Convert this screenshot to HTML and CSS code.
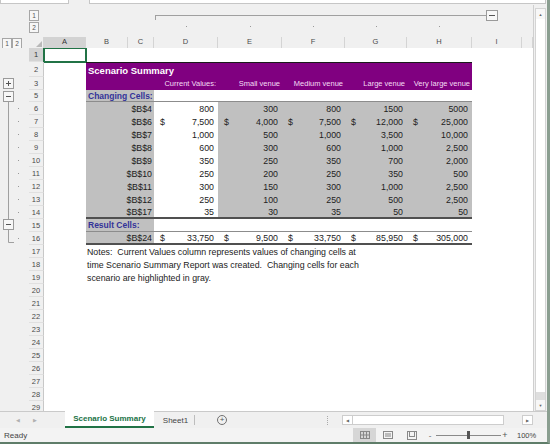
FILE: index.html
```html
<!DOCTYPE html>
<html>
<head>
    <title>Scenario Summary - Excel</title>
    <meta charset="utf-8">
    <link rel="stylesheet" href="styles.css">
</head>
<body>
<div class="window">
    <div class="formula-strip">
        <span class="box box-name"></span>
        <span class="box box-formula"></span>
    </div>

    <div class="work">
        <div class="sheet">
            <!-- column outline levels -->
            <div class="col-outline">
                <div class="gap-outline"></div>
                <div class="level-v">
                    <span class="obtn">1</span>
                    <span class="obtn">2</span>
                </div>
                <svg class="col-bracket" width="489" height="32" viewBox="0 0 489 32">
                    <line x1="111" y1="10.5" x2="442" y2="10.5" stroke="#a0a0a0" stroke-width="1"/>
                    <line x1="111.5" y1="10" x2="111.5" y2="15" stroke="#a0a0a0" stroke-width="1"/>
                    <rect x="442.5" y="5.5" width="11" height="10" fill="#f7f7f7" stroke="#9a9a9a"/>
                    <line x1="445" y1="10.5" x2="451" y2="10.5" stroke="#555" stroke-width="1"/>
                    <rect x="142" y="21" width="1" height="1" fill="#999"/>
                    <rect x="206" y="21" width="1" height="1" fill="#999"/>
                    <rect x="269" y="21" width="1" height="1" fill="#999"/>
                    <rect x="332" y="21" width="1" height="1" fill="#999"/>
                    <rect x="395" y="21" width="1" height="1" fill="#999"/>
                </svg>
            </div>

            <!-- column headers -->
            <div class="col-header">
                <div class="ch-outline">
                    <span class="obtn">1</span><span class="obtn">2</span>
                </div>
                <div class="ch corner"><span class="corner-tri"></span></div>
                <div class="ch ch-sel">A</div>
                <div class="ch">B</div>
                <div class="ch">C</div>
                <div class="ch">D</div>
                <div class="ch">E</div>
                <div class="ch">F</div>
                <div class="ch">G</div>
                <div class="ch">H</div>
                <div class="ch">I</div>
                <div class="ch"></div>
            </div>

            <div class="sheet-body">
                <svg class="row-outline" width="29" height="366" viewBox="0 0 29 366">
                    <rect x="3.5" y="30.5" width="10" height="10" fill="#f7f7f7" stroke="#9a9a9a"/>
                    <line x1="6" y1="35.5" x2="11" y2="35.5" stroke="#555"/>
                    <line x1="8.5" y1="33" x2="8.5" y2="38" stroke="#555"/>
                    <rect x="3.5" y="43.5" width="10" height="10" fill="#f7f7f7" stroke="#9a9a9a"/>
                    <line x1="6" y1="48.5" x2="11" y2="48.5" stroke="#555"/>
                    <line x1="8.5" y1="53.5" x2="8.5" y2="171.5" stroke="#a0a0a0"/>
                    <rect x="3.5" y="171.5" width="10" height="10" fill="#f7f7f7" stroke="#9a9a9a"/>
                    <line x1="6" y1="176.5" x2="11" y2="176.5" stroke="#555"/>
                    <polyline points="8.5,181.5 8.5,194.5 14,194.5" fill="none" stroke="#a0a0a0"/>
                    <rect x="18" y="60" width="1" height="1" fill="#999"/>
                    <rect x="18" y="73" width="1" height="1" fill="#999"/>
                    <rect x="18" y="86" width="1" height="1" fill="#999"/>
                    <rect x="18" y="99" width="1" height="1" fill="#999"/>
                    <rect x="18" y="112" width="1" height="1" fill="#999"/>
                    <rect x="18" y="125" width="1" height="1" fill="#999"/>
                    <rect x="18" y="138" width="1" height="1" fill="#999"/>
                    <rect x="18" y="151" width="1" height="1" fill="#999"/>
                    <rect x="18" y="164" width="1" height="1" fill="#999"/>
                    <rect x="18" y="190" width="1" height="1" fill="#999"/>
                </svg>

                <div class="cells">
                    <div class="row r14"><div class="rn rn-sel">1</div><div class="c a1"></div></div>
                    <div class="row r15"><div class="rn">2</div><div class="c"></div><div class="c pu title">Scenario Summary</div></div>
                    <div class="row"><div class="rn">3</div><div class="c"></div>
                        <div class="c pu bc"></div>
                        <div class="c pu hd">Current Values:</div>
                        <div class="c pu hd">Small venue</div>
                        <div class="c pu hd">Medium venue</div>
                        <div class="c pu hd">Large venue</div>
                        <div class="c pu hd">Very large venue</div>
                    </div>
                    <div class="row r12"><div class="rn">5</div><div class="c"></div>
                        <div class="c g sect bc bb">Changing Cells:</div>
                        <div class="c bb span5"></div>
                    </div>

                    <div class="row"><div class="rn">6</div><div class="c"></div>
                        <div class="c g lab bc">$B$4</div>
                        <div class="c r">800</div><div class="c r g">300</div><div class="c r g">800</div><div class="c r g">1500</div><div class="c r g">5000</div>
                    </div>
                    <div class="row"><div class="rn">7</div><div class="c"></div>
                        <div class="c g lab bc">$B$6</div>
                        <div class="c d"><span>$</span><span>7,500</span></div>
                        <div class="c d g"><span>$</span><span>4,000</span></div>
                        <div class="c d g"><span>$</span><span>7,500</span></div>
                        <div class="c d g"><span>$</span><span>12,000</span></div>
                        <div class="c d g"><span>$</span><span>25,000</span></div>
                    </div>
                    <div class="row"><div class="rn">8</div><div class="c"></div>
                        <div class="c g lab bc">$B$7</div>
                        <div class="c r">1,000</div><div class="c r g">500</div><div class="c r g">1,000</div><div class="c r g">3,500</div><div class="c r g">10,000</div>
                    </div>
                    <div class="row"><div class="rn">9</div><div class="c"></div>
                        <div class="c g lab bc">$B$8</div>
                        <div class="c r">600</div><div class="c r g">300</div><div class="c r g">600</div><div class="c r g">1,000</div><div class="c r g">2,500</div>
                    </div>
                    <div class="row"><div class="rn">10</div><div class="c"></div>
                        <div class="c g lab bc">$B$9</div>
                        <div class="c r">350</div><div class="c r g">250</div><div class="c r g">350</div><div class="c r g">700</div><div class="c r g">2,000</div>
                    </div>
                    <div class="row"><div class="rn">11</div><div class="c"></div>
                        <div class="c g lab bc">$B$10</div>
                        <div class="c r">250</div><div class="c r g">200</div><div class="c r g">250</div><div class="c r g">350</div><div class="c r g">500</div>
                    </div>
                    <div class="row"><div class="rn">12</div><div class="c"></div>
                        <div class="c g lab bc">$B$11</div>
                        <div class="c r">300</div><div class="c r g">150</div><div class="c r g">300</div><div class="c r g">1,000</div><div class="c r g">2,500</div>
                    </div>
                    <div class="row"><div class="rn">13</div><div class="c"></div>
                        <div class="c g lab bc">$B$12</div>
                        <div class="c r">250</div><div class="c r g">100</div><div class="c r g">250</div><div class="c r g">500</div><div class="c r g">2,500</div>
                    </div>
                    <div class="row"><div class="rn">14</div><div class="c"></div>
                        <div class="c g lab bc bk">$B$17</div>
                        <div class="c r bk">35</div><div class="c r g bk">30</div><div class="c r g bk">35</div><div class="c r g bk">50</div><div class="c r g bk">50</div>
                    </div>
                    <div class="row"><div class="rn">15</div><div class="c"></div>
                        <div class="c g sect bc bb">Result Cells:</div>
                        <div class="c bb span5"></div>
                    </div>
                    <div class="row"><div class="rn">16</div><div class="c"></div>
                        <div class="c g lab bc bk">$B$24</div>
                        <div class="c d bk"><span>$</span><span>33,750</span></div>
                        <div class="c d bk"><span>$</span><span>9,500</span></div>
                        <div class="c d bk"><span>$</span><span>33,750</span></div>
                        <div class="c d bk"><span>$</span><span>85,950</span></div>
                        <div class="c d bk"><span>$</span><span>305,000</span></div>
                    </div>
                    <div class="row"><div class="rn">17</div><div class="c"></div><div class="c note">Notes:  Current Values column represents values of changing cells at</div></div>
                    <div class="row"><div class="rn">18</div><div class="c"></div><div class="c note">time Scenario Summary Report was created.  Changing cells for each</div></div>
                    <div class="row"><div class="rn">19</div><div class="c"></div><div class="c note">scenario are highlighted in gray.</div></div>
                    <div class="row"><div class="rn">20</div></div>
                    <div class="row"><div class="rn">21</div></div>
                    <div class="row"><div class="rn">22</div></div>
                    <div class="row"><div class="rn">23</div></div>
                    <div class="row"><div class="rn">24</div></div>
                    <div class="row"><div class="rn">25</div></div>
                    <div class="row"><div class="rn">26</div></div>
                    <div class="row"><div class="rn">27</div></div>
                    <div class="row"><div class="rn">28</div></div>
                    <div class="row"><div class="rn">29</div></div>
                </div>
            </div>
        </div>

        <div class="vscroll">
            <div class="vbar">
                <div class="arrow">&#9650;</div>
                <div class="vtrack"></div>
                <div class="vthumb"></div>
                <div class="arrow">&#9660;</div>
            </div>
        </div>
    </div>

    <div class="tabbar">
        <div class="tab-nav"><span>&#9664;</span><span>&#9654;</span></div>
        <div class="tab active">Scenario Summary</div>
        <div class="tab tab2">Sheet1</div>
        <div class="addsheet">+</div>
        <div class="hs-area">
            <span class="split"></span>
            <div class="harrow">&#9664;</div>
            <div class="htrack"></div>
            <div class="hgap"></div>
            <div class="harrow">&#9654;</div>
        </div>
    </div>

    <div class="statusbar">
        <span class="ready">Ready</span>
        <div class="status-right">
            <div class="view on">
                <svg width="10" height="8" viewBox="0 0 10 8">
                    <rect x="0.5" y="0.5" width="9" height="7" fill="none" stroke="#888"/>
                    <line x1="3.5" y1="0" x2="3.5" y2="8" stroke="#888"/>
                    <line x1="6.5" y1="0" x2="6.5" y2="8" stroke="#888"/>
                    <line x1="0" y1="4" x2="10" y2="4" stroke="#888"/>
                </svg>
            </div>
            <div class="view">
                <svg width="10" height="8" viewBox="0 0 10 8">
                    <rect x="0.5" y="0.5" width="9" height="7" fill="none" stroke="#888"/>
                    <rect x="2" y="2" width="6" height="4" fill="#bbb"/>
                </svg>
            </div>
            <div class="view">
                <svg width="10" height="9" viewBox="0 0 10 9">
                    <rect x="0.5" y="0.5" width="9" height="8" fill="none" stroke="#888"/>
                    <rect x="2.5" y="0.5" width="5" height="5" fill="none" stroke="#888"/>
                </svg>
            </div>
            <div class="zoom-minus">-</div>
            <div class="slider"><span class="sl-line"></span><span class="thumb"></span><span class="sl-line"></span></div>
            <div class="zoom-plus">+</div>
            <div class="pct">100%</div>
        </div>
    </div>
</div>
</body>
</html>
```

FILE: styles.css
```css
body {
    margin: 0;
    font-family: "Liberation Sans", Arial, sans-serif;
    font-size: 8px;
    color: #333;
    background: #fff;
}
.window {
    width: 550px;
    height: 444px;
    box-sizing: border-box;
    border-right: 3px solid #8a9e90;
    border-bottom: 2px solid #5f7d69;
    background: #f0f0f0;
    display: flex;
    flex-direction: column;
    overflow: hidden;
}

/* formula bar remains */
.formula-strip { height: 5px; display: flex; gap: 20px; flex-shrink: 0; }
.box { height: 3px; background: #fff; border: 1px solid #c6c6c6; border-top: 0; }
.box-name { width: 67px; }
.box-formula { width: 455px; }

.work { height: 406px; display: flex; flex-shrink: 0; }
.sheet {
    width: 534px;
    border-right: 1px solid #cfcfcf;
    box-sizing: border-box;
    display: flex;
    flex-direction: column;
}

/* outline buttons */
.obtn {
    display: block;
    width: 8px;
    height: 9px;
    border: 1px solid #a6a6a6;
    background: #f7f7f7;
    color: #555;
    font-size: 6.5px;
    line-height: 9px;
    text-align: center;
}
.col-outline { height: 32px; display: flex; }
.gap-outline { width: 29px; }
.level-v { width: 15px; padding-top: 5px; display: flex; flex-direction: column; gap: 1px; }
.col-bracket { display: block; }

.col-header {
    height: 11px;
    display: grid;
    grid-template-columns: 29px 15px 42px 42px 26px 64px 64px 63px 62px 65px 50px 11px;
}
.ch-outline { display: flex; padding: 1px 0 0 2px; }
.ch {
    box-sizing: border-box;
    border-right: 1px solid #d4d4d4;
    border-bottom: 1px solid #bdbdbd;
    text-align: center;
    line-height: 10px;
    color: #4a4a4a;
    font-size: 7.5px;
}
.ch-sel { background: #d3d3d3; color: #333; }
.corner { display: flex; align-items: flex-end; justify-content: flex-end; padding: 0 1px 1px 0; }
.corner-tri {
    width: 0;
    height: 0;
    border-left: 6px solid transparent;
    border-bottom: 6px solid #b9b9b9;
}

.sheet-body { height: 363px; display: flex; overflow: hidden; background: #fff; }
.row-outline { display: block; background: #f0f0f0; flex-shrink: 0; }
.cells { flex: 1; }
.row {
    display: grid;
    grid-template-columns: 15px 42px 42px 26px 64px 64px 63px 62px 65px 50px 11px;
    height: 13px;
}
.r14 { height: 14px; }
.r15 { height: 15px; }
.r12 { height: 12px; }
.rn {
    box-sizing: border-box;
    background: #f0f0f0;
    border-right: 1px solid #c8c8c8;
    border-bottom: 1px solid #e0e0e0;
    display: flex;
    align-items: center;
    justify-content: center;
    color: #4a4a4a;
    font-size: 7.5px;
}
.rn-sel { background: #d3d3d3; color: #333; }

.c {
    box-sizing: border-box;
    display: flex;
    align-items: center;
    padding: 0 4px 0 6px;
    white-space: nowrap;
    min-width: 0;
    color: #222;
    font-size: 8.8px;
}
.a1 { outline: 2px solid #217346; outline-offset: -1px; }
.r { justify-content: flex-end; }
.d { justify-content: space-between; }
.g { background: #c0c0c0; }
.pu { background: #800080; }
.bc { grid-column: span 2; }
.span5 { grid-column: span 5; }
.title {
    grid-column: 3 / span 7;
    color: #fff;
    font-weight: bold;
    font-size: 9.5px;
    padding-left: 2px;
    border-top: 1px solid #1a1a1a;
}
.hd { justify-content: flex-end; color: #f4dcf4; font-size: 7.5px; padding-right: 2px; }
.sect { color: #333399; font-weight: bold; font-size: 8.5px; padding-left: 2px; }
.lab { justify-content: flex-end; padding-right: 2px; color: #1a1a1a; }
.bb { border-bottom: 1px solid #8c8c8c; }
.bk { border-bottom: 2px solid #505050; }
.note { grid-column: 3 / -1; white-space: pre; overflow: visible; padding-left: 1px; }

/* vertical scrollbar */
.vscroll { width: 13px; padding: 3px 1px 0 1px; box-sizing: border-box; }
.vbar {
    height: 403px;
    box-sizing: border-box;
    border: 1px solid #d4d4d4;
    background: #fff;
    display: flex;
    flex-direction: column;
}
.arrow {
    height: 10px;
    display: flex;
    align-items: center;
    justify-content: center;
    font-size: 4px;
    color: #666;
    background: #f7f7f7;
}
.vtrack { flex: 1; }
.vthumb { height: 8px; background: #dedede; }

/* sheet tabs */
.tabbar {
    height: 17px;
    flex-shrink: 0;
    box-sizing: border-box;
    border-top: 1px solid #cacaca;
    display: flex;
    align-items: stretch;
}
.tab-nav {
    width: 62px;
    display: flex;
    gap: 13px;
    padding-left: 16px;
    box-sizing: border-box;
    align-items: center;
    color: #b0b0b0;
    font-size: 5px;
}
.tab { display: flex; align-items: center; justify-content: center; box-sizing: border-box; }
.tab.active {
    width: 89px;
    margin-left: 3px;
    margin-top: -1px;
    background: #fff;
    color: #217346;
    font-weight: bold;
    font-size: 8px;
    border-bottom: 2px solid #217346;
}
.tab2 {
    width: 38px;
    margin-left: 3px;
    color: #444;
    border-right: 1px solid #bdbdbd;
    margin-top: 3px;
    margin-bottom: 3px;
}
.addsheet {
    align-self: center;
    margin-left: 22px;
    width: 8px;
    height: 8px;
    border: 1px solid #707070;
    border-radius: 50%;
    color: #555;
    font-size: 8px;
    line-height: 8px;
    text-align: center;
}
.hs-area { margin-left: auto; width: 220px; display: flex; align-items: center; }
.split { width: 1px; height: 9px; border-left: 1px dotted #aaa; margin-right: 13px; }
.harrow {
    width: 9px;
    height: 8px;
    border: 1px solid #cdcdcd;
    background: #fff;
    color: #666;
    font-size: 4px;
    display: flex;
    align-items: center;
    justify-content: center;
}
.htrack { width: 152px; height: 8px; border: 1px solid #cdcdcd; border-left: 0; background: #fff; }
.hgap { width: 18px; }
.tabbar .hs-area .harrow:last-child { margin-right: 14px; }

/* status bar */
.statusbar { height: 14px; flex-shrink: 0; display: flex; align-items: center; background: #f3f3f3; }
.ready { padding-left: 4px; color: #444; }
.status-right { margin-left: auto; width: 194px; height: 100%; display: flex; align-items: center; }
.view { width: 24px; height: 100%; display: flex; align-items: center; justify-content: center; }
.view.on { width: 23px; background: #d6d6d6; }
.zoom-minus { width: 12px; text-align: center; color: #555; }
.slider { width: 65px; display: flex; align-items: center; }
.sl-line { height: 1px; background: #8a8a8a; flex: 1; }
.sl-line:first-child { flex: 0 0 31px; }
.thumb { width: 3px; height: 8px; background: #555; }
.zoom-plus { width: 8px; text-align: center; color: #555; font-size: 9px; }
.pct { padding-left: 8px; color: #444; font-size: 7.5px; }
```
